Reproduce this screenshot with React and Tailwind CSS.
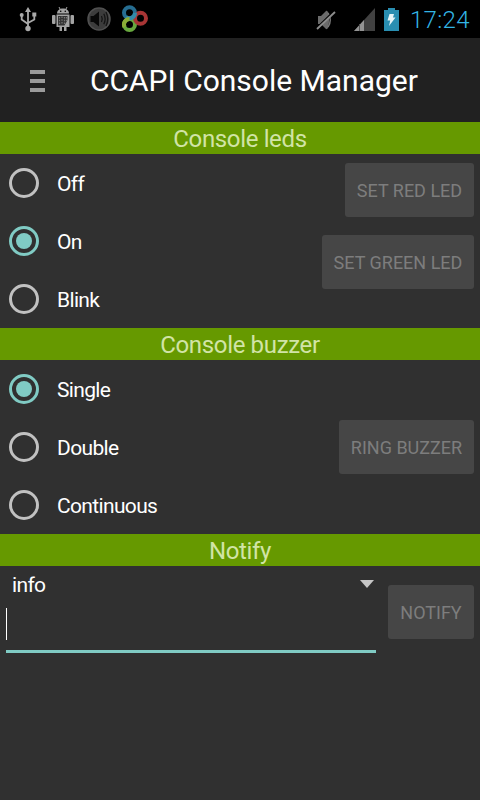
import React, { useState } from 'react';

const UsbIcon = () => (
    <svg width="18" height="26" viewBox="0 0 18 26" fill="none" stroke="#a9a9a9" strokeWidth="1.8">
        <path d="M9 5V22M2.700 10V13.500L9 18M15.300 9V13.500L9 17" />
        <path d="M9 1L12 6H6Z" fill="#a9a9a9" stroke="none" />
        <circle cx="9" cy="22.500" r="2.700" fill="#a9a9a9" stroke="none" />
        <circle cx="2.700" cy="9" r="2" fill="#a9a9a9" stroke="none" />
        <path d="M13.300 6.500H17.300V10.500H13.300Z" fill="#a9a9a9" stroke="none" />
    </svg>
);

const DebugIcon = () => (
    <svg width="22" height="26" viewBox="0 0 22 26" fill="#a3a3a3">
        <path d="M5 7.500C5 4.500 7.500 2.500 11 2.500S17 4.500 17 7.500Z" />
        <path d="M7 1L8.500 4M15 1L13.500 4" stroke="#a3a3a3" />
        <rect x="0" y="9" width="3.500" height="9" rx="1" />
        <rect x="18.500" y="9" width="3.500" height="9" rx="1" />
        <path d="M4.500 8.500H17.500V21H14.500V25H12V21H10V25H7.500V21H4.500Z" />
        <path d="M6 10H15.500V14L12.500 19.500H6Z" fill="#333" />
        <path d="M7.500 11V19M10 10.500V19M12.500 11V18M14.500 11V15" stroke="#777" strokeWidth="1.200" strokeDasharray="1.500 1.300" />
        <circle cx="8.700" cy="5.300" r="0.800" fill="#000" />
        <circle cx="13.300" cy="5.300" r="0.800" fill="#000" />
    </svg>
);

const SpeakerIcon = () => (
    <svg width="24" height="24" viewBox="0 0 24 24" fill="none">
        <circle cx="12" cy="12" r="11" fill="#3c3c3c" stroke="#505050" strokeWidth="1.500" />
        <path d="M3.500 9H6.500L12 4.500V19.500L6.500 15H3.500Z" fill="#080808" />
        <path d="M14.500 9Q16 12 14.500 15M16.800 6.800Q19.500 12 16.800 17.200M19 5Q22.500 12 19 19" stroke="#141414" strokeWidth="1.300" />
    </svg>
);

const LoopsIcon = () => (
    <svg width="28" height="28" viewBox="0 0 28 28" fill="none" strokeWidth="4">
        <circle cx="8.500" cy="7.800" r="5.500" stroke="#266d91" />
        <circle cx="8.500" cy="19.500" r="5.500" stroke="#68a83e" />
        <circle cx="19.500" cy="13.300" r="5.500" stroke="#a83535" />
        <path d="M5 12C9 15 14 12 14 7.800" stroke="#338aa8" />
        <path d="M3.600 22A5.500 5.500 0 0 1 8.500 14" stroke="#8cac37" />
    </svg>
);

const MuteIcon = () => (
    <svg width="20" height="22" viewBox="0 0 20 22" fill="none">
        <path d="M2 7H5L10 2C12 1 13 5 13 11S12 21 10 20L5 15H2Z" fill="#6b6b6b" />
        <path d="M12 4C15 8 15 14 12 18" stroke="#777" strokeWidth="1.500" />
        <path d="M1 18.500L18 2" stroke="#000" strokeWidth="1.500" />
        <path d="M1 20L19 3" stroke="#8d8d8d" strokeWidth="1.800" />
    </svg>
);

const SignalIcon = () => (
    <svg width="21" height="23" viewBox="0 0 21 23">
        <path d="M0 23L21 0V23Z" fill="#414141" />
        <path d="M0 23L10 12V23Z" fill="#939393" />
        <path d="M5.500 16V23" stroke="#555" />
    </svg>
);

const BatteryIcon = () => (
    <svg width="15" height="23" viewBox="0 0 15 23">
        <path d="M4 0H11V2H15V23H0V2H4Z" fill="#298eb1" />
        <path d="M5.500 6H10L9 9.500H11.500L5 18L6.200 12.500H3.500Z" fill="#e6f5f8" />
    </svg>
);

const StatusBar = () => (
    <div className="flex h-[38px] items-center bg-black">
        <div className="flex w-full items-center pl-[19px]">
            <UsbIcon />
            <div className="ml-[15px]"><DebugIcon /></div>
            <div className="ml-[13px]"><SpeakerIcon /></div>
            <div className="ml-[10px]"><LoopsIcon /></div>
        </div>
        <div className="flex shrink-0 items-center pr-[9px]">
            <div className="mt-[2px]"><MuteIcon /></div>
            <div className="ml-[18px]"><SignalIcon /></div>
            <div className="ml-[9px]"><BatteryIcon /></div>
            <span className="ml-[11px] w-[61px] pt-[2px] text-2xl font-light tracking-[0.3px] whitespace-nowrap text-[#33b5e5]">17:24</span>
        </div>
    </div>
);

const SectionTitle = ({ children }) => (
    <h2 className="h-8 bg-[#669900] pt-px text-center text-2xl leading-8 tracking-[-0.35px] text-[#d1e4a6]">{children}</h2>
);

const RadioList = ({ options, value, onChange }) => (
    <div>
        {options.map((option) => (
            <button key={option} onClick={() => onChange(option)} className="flex h-[58px] items-center pl-[9px]">
                <span
                    className={`flex size-[30px] items-center justify-center rounded-full border-3 ${value === option ? 'border-[#80cbc4]' : 'border-[#c1c1c1]'}`}
                >
                    {value === option && <span className="size-4 rounded-full bg-[#80cbc4]" />}
                </span>
                <span className="ml-[18px] pt-[2px] text-[21px] leading-6 tracking-[-0.65px] text-white">{option}</span>
            </button>
        ))}
    </div>
);

const ActionButton = ({ children, className }) => (
    <button disabled className={`h-[54px] shrink-0 rounded-[3px] bg-[#464646] pt-px text-lg whitespace-nowrap text-[#7d7d7d] ${className}`}>
        {children}
    </button>
);

const App = () => {
    const [led, setLed] = useState('On');
    const [buzzer, setBuzzer] = useState('Single');
    const [message, setMessage] = useState('');

    return (
        <div className="h-[800px] w-[480px] overflow-hidden bg-[#303030] font-['Roboto',sans-serif]">
            <StatusBar />

            <header className="flex h-[84px] items-center bg-[#212121] pl-[30px]">
                <div className="flex w-[15px] flex-col gap-[5px] pt-[2px]">
                    <span className="h-1 bg-[#9b9b9b]" />
                    <span className="h-1 bg-[#9b9b9b]" />
                    <span className="h-1 bg-[#9b9b9b]" />
                </div>
                <h1 className="ml-[45px] text-[30px] whitespace-nowrap text-white">CCAPI Console Manager</h1>
            </header>

            <SectionTitle>Console leds</SectionTitle>
            <div className="flex h-[174px] justify-between pr-[6px]">
                <RadioList options={['Off', 'On', 'Blink']} value={led} onChange={setLed} />
                <div className="flex flex-col items-end gap-[18px] pt-[9px]">
                    <ActionButton className="w-[129px]">SET RED LED</ActionButton>
                    <ActionButton className="w-[152px]">SET GREEN LED</ActionButton>
                </div>
            </div>

            <SectionTitle>Console buzzer</SectionTitle>
            <div className="flex h-[174px] items-center justify-between pr-[6px]">
                <RadioList options={['Single', 'Double', 'Continuous']} value={buzzer} onChange={setBuzzer} />
                <ActionButton className="w-[135px]">RING BUZZER</ActionButton>
            </div>

            <SectionTitle>Notify</SectionTitle>
            <div className="flex pr-[6px] pl-[6px]">
                <div className="w-[370px]">
                    <div className="flex h-9 items-center justify-between pr-[2px] pl-[6px]">
                        <span className="pt-[2px] text-[21px] leading-6 tracking-[-0.65px] text-white">info</span>
                        <svg width="14" height="8" viewBox="0 0 14 8" fill="#c6c6c6">
                            <path d="M0 0H14L7 8Z" />
                        </svg>
                    </div>
                    <div className="flex h-[51px] items-start border-b-3 border-[#80cbc4] pt-[6px]">
                        <span className="h-8 w-px bg-white" />
                        <input
                            value={message}
                            onChange={(e) => setMessage(e.target.value)}
                            className="h-8 w-full bg-transparent text-[21px] text-white outline-none"
                        />
                    </div>
                </div>
                <ActionButton className="mt-[19px] ml-3 w-[86px]">NOTIFY</ActionButton>
            </div>
        </div>
    );
};

export default App;
